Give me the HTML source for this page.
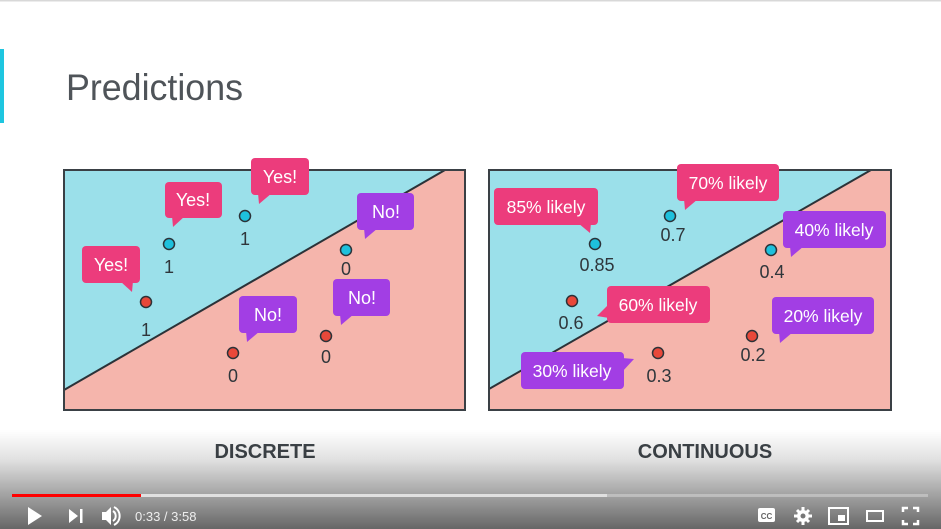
<!DOCTYPE html>
<html><head><style>
html,body{margin:0;padding:0;background:#fff;width:941px;height:529px;overflow:hidden}
svg{display:block}
text{font-family:"Liberation Sans","DejaVu Sans",sans-serif}
</style></head><body>
<svg width="941" height="529" viewBox="0 0 941 529" xmlns="http://www.w3.org/2000/svg">
<defs>
<linearGradient id="g" x1="0" y1="0" x2="0" y2="1">
<stop offset="0" stop-color="#000" stop-opacity="0"/>
<stop offset="0.3" stop-color="#000" stop-opacity="0.12"/>
<stop offset="1" stop-color="#000" stop-opacity="0.6"/>
</linearGradient>
</defs>
<rect x="0" y="0" width="941" height="529" fill="#fff"/>
<rect x="0" y="0" width="941" height="1.5" fill="#d8d8d8"/>
<rect x="0" y="49" width="4" height="74" fill="#1ec6e0"/>
<text x="66" y="100" font-size="37" fill="#4f5459" textLength="177" lengthAdjust="spacingAndGlyphs">Predictions</text>

<rect x="64" y="170" width="401" height="240" fill="#f5b5ac"/>
<polygon points="64,170 445,170 64,390" fill="#9be0ea"/>
<line x1="64" y1="390" x2="445" y2="170" stroke="#2b3238" stroke-width="2"/>
<rect x="64" y="170" width="401" height="240" fill="none" stroke="#3a4045" stroke-width="2"/>
<g font-size="18" fill="#fff" text-anchor="middle">
<rect x="165" y="182" width="57" height="36" rx="4" fill="#ec3c7c"/><polygon points="172,216 185,216 173,227" fill="#ec3c7c"/><text x="193" y="206">Yes!</text>
<rect x="251" y="158" width="58" height="37" rx="4" fill="#ec3c7c"/><polygon points="258,193 272,193 259,204" fill="#ec3c7c"/><text x="280" y="183">Yes!</text>
<rect x="82" y="246" width="58" height="37" rx="4" fill="#ec3c7c"/><polygon points="120,281 133,281 132,292" fill="#ec3c7c"/><text x="111" y="271">Yes!</text>
<rect x="357" y="193" width="57" height="37" rx="4" fill="#a23ee4"/><polygon points="364,228 378,228 365,239" fill="#a23ee4"/><text x="386" y="218">No!</text>
<rect x="239" y="296" width="58" height="37" rx="4" fill="#a23ee4"/><polygon points="246,331 260,331 247,342" fill="#a23ee4"/><text x="268" y="321">No!</text>
<rect x="333" y="279" width="57" height="37" rx="4" fill="#a23ee4"/><polygon points="340,314 354,314 341,325" fill="#a23ee4"/><text x="362" y="304">No!</text>
</g>
<g stroke="#2b3238" stroke-width="1.5">
<circle cx="169" cy="244" r="5.5" fill="#1ec0dc"/>
<circle cx="245" cy="216" r="5.5" fill="#1ec0dc"/>
<circle cx="146" cy="302" r="5.5" fill="#e8483a"/>
<circle cx="346" cy="250" r="5.5" fill="#1ec0dc"/>
<circle cx="233" cy="353" r="5.5" fill="#e8483a"/>
<circle cx="326" cy="336" r="5.5" fill="#e8483a"/>
</g>
<g font-size="18" fill="#2f363b" text-anchor="middle">
<text x="169" y="273">1</text><text x="245" y="245">1</text><text x="146" y="336">1</text>
<text x="346" y="275">0</text><text x="233" y="382">0</text><text x="326" y="363">0</text>
</g>

<rect x="489" y="170" width="402" height="240" fill="#f5b5ac"/>
<polygon points="489,170 871,170 489,389" fill="#9be0ea"/>
<line x1="489" y1="389" x2="871" y2="170" stroke="#2b3238" stroke-width="2"/>
<rect x="489" y="170" width="402" height="240" fill="none" stroke="#3a4045" stroke-width="2"/>
<g font-size="17.5" fill="#fff" text-anchor="middle">
<rect x="494" y="188" width="104" height="37" rx="4" fill="#ec3c7c"/><polygon points="578,223 591,223 590,233" fill="#ec3c7c"/><text x="546" y="213">85% likely</text>
<rect x="677" y="164" width="102" height="37" rx="4" fill="#ec3c7c"/><polygon points="684,199 698,199 685,210" fill="#ec3c7c"/><text x="728" y="189">70% likely</text>
<rect x="783" y="211" width="103" height="37" rx="4" fill="#a23ee4"/><polygon points="790,246 804,246 791,257" fill="#a23ee4"/><text x="834" y="236">40% likely</text>
<rect x="607" y="286" width="103" height="37" rx="4" fill="#ec3c7c"/><polygon points="609,304 609,318 597,316" fill="#ec3c7c"/><text x="658" y="311">60% likely</text>
<rect x="772" y="297" width="102" height="37" rx="4" fill="#a23ee4"/><polygon points="779,332 793,332 780,343" fill="#a23ee4"/><text x="823" y="322">20% likely</text>
<rect x="521" y="352" width="103" height="37" rx="4" fill="#a23ee4"/><polygon points="622,358 622,372 634,359" fill="#a23ee4"/><text x="572" y="377">30% likely</text>
</g>
<g stroke="#2b3238" stroke-width="1.5">
<circle cx="670" cy="216" r="5.5" fill="#1ec0dc"/>
<circle cx="595" cy="244" r="5.5" fill="#1ec0dc"/>
<circle cx="771" cy="250" r="5.5" fill="#1ec0dc"/>
<circle cx="572" cy="301" r="5.5" fill="#e8483a"/>
<circle cx="658" cy="353" r="5.5" fill="#e8483a"/>
<circle cx="752" cy="336" r="5.5" fill="#e8483a"/>
</g>
<g font-size="18" fill="#2f363b" text-anchor="middle">
<text x="673" y="241">0.7</text><text x="597" y="271">0.85</text><text x="772" y="278">0.4</text>
<text x="571" y="329">0.6</text><text x="659" y="382">0.3</text><text x="753" y="361">0.2</text>
</g>

<g font-size="20" font-weight="bold" fill="#3f454a" text-anchor="middle">
<text x="265" y="458">DISCRETE</text>
<text x="705" y="458">CONTINUOUS</text>
</g>

<rect x="0" y="430" width="941" height="99" fill="url(#g)"/>
<rect x="12" y="494" width="916" height="3" fill="#ffffff" fill-opacity="0.3"/>
<rect x="12" y="494" width="595" height="3" fill="#e8e8e8" fill-opacity="0.8"/>
<rect x="12" y="494" width="129" height="3" fill="#f00"/>
<g fill="#fff">
<polygon points="28,507 28,525 42,516"/>
<polygon points="69,509 69,523 78,516"/><rect x="80" y="509" width="2.5" height="14"/>
<polygon points="102,512 106,512 111,507 111,525 106,520 102,520"/>
<path d="M113,511 a6,6 0 0 1 0,10" stroke="#fff" stroke-width="2" fill="none"/>
<path d="M114,507 a10,10 0 0 1 0,18" stroke="#fff" stroke-width="2" fill="none"/>
<text x="135" y="521" font-size="13" fill="#eee">0:33 / 3:58</text>
<rect x="758" y="508" width="17" height="14" rx="2"/>
<text x="766.5" y="519" font-size="8" font-weight="bold" fill="#666" text-anchor="middle">CC</text>
<circle cx="803" cy="516" r="6"/>
<g stroke="#fff" stroke-width="3"><line x1="803" y1="507" x2="803" y2="525"/><line x1="794" y1="516" x2="812" y2="516"/><line x1="797" y1="510" x2="809" y2="522"/><line x1="809" y1="510" x2="797" y2="522"/></g>
<circle cx="803" cy="516" r="2.5" fill="#777"/>
<rect x="829" y="508" width="19" height="16" fill="none" stroke="#fff" stroke-width="2"/><rect x="838" y="515" width="7" height="6"/>
<rect x="867" y="511" width="16" height="10" fill="none" stroke="#fff" stroke-width="2"/>
<path d="M903,512 v-4 h5 M913,508 h5 v4 M918,520 v4 h-5 M908,524 h-5 v-4" stroke="#fff" stroke-width="2.5" fill="none"/>
</g>
</svg>
</body></html>
